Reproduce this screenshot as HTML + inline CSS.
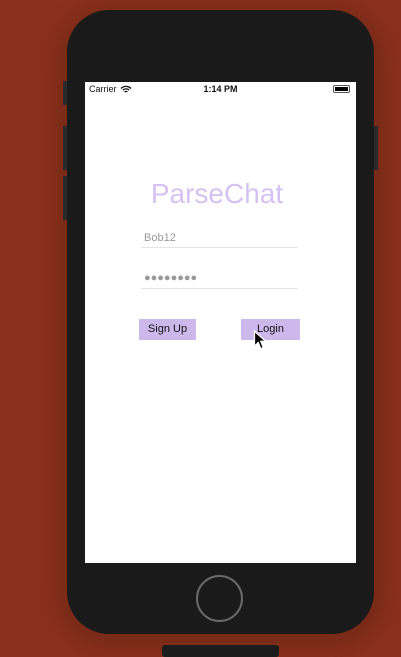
<!DOCTYPE html>
<html><head><style>
body{margin:0;width:401px;height:651px;background:#8a301c;position:relative;overflow:hidden;font-family:"Liberation Sans",sans-serif}
.a{position:absolute}
</style></head><body>
<div class="a" style="left:55px;top:5px;width:332px;height:645px;border-radius:55px;background:#7a2a18;filter:blur(8px)"></div>
<div class="a" style="left:63px;top:81px;width:5px;height:24px;background:#2a2a2a"></div>
<div class="a" style="left:63px;top:126px;width:5px;height:44px;background:#2a2a2a"></div>
<div class="a" style="left:63px;top:176px;width:5px;height:44px;background:#2a2a2a"></div>
<div class="a" style="left:373px;top:126px;width:5px;height:44px;background:#2a2a2a"></div>
<div class="a" style="left:162px;top:645px;width:117px;height:12px;border-radius:3px;background:#1c1c1c"></div>
<div class="a" style="left:67px;top:10px;width:307px;height:624px;border-radius:42px;background:#1a1a1a"></div>
<div class="a" style="left:196px;top:575px;width:43px;height:43px;border-radius:50%;border:2px solid #6a6a6a"></div>
<div class="a" style="left:85px;top:82px;width:271px;height:481px;background:#fff">
 <div class="a" style="left:4px;top:2px;font-size:9px;color:#111">Carrier</div>
 <svg class="a" style="left:35px;top:3px" width="12" height="9" viewBox="0 0 12 9"><path d="M1 3.5a7 7 0 0 1 10 0M2.8 5.2a4.5 4.5 0 0 1 6.4 0M4.6 7a2 2 0 0 1 2.8 0" stroke="#111" stroke-width="1.3" fill="none"/></svg>
 <div class="a" style="left:0;width:271px;top:2px;font-size:9px;font-weight:bold;color:#111;text-align:center">1:14 PM</div>
 <div class="a" style="left:248px;top:3px;width:15px;height:6px;border:1px solid #555;border-radius:2px"><div style="margin:1px;height:4px;background:#000"></div></div>
 <div class="a" style="left:0;width:264px;top:96px;font-size:28px;color:#d6c2f2;text-align:center">ParseChat</div>
 <div class="a" style="left:59px;top:150px;font-size:11px;color:#999">Bob12</div>
 <div class="a" style="left:56px;top:165px;width:157px;height:1px;background:#e6e6e6"></div>
 <div class="a" style="left:59px;top:190px;font-size:11px;color:#999">●●●●●●●●</div>
 <div class="a" style="left:56px;top:206px;width:157px;height:1px;background:#e6e6e6"></div>
 <div class="a" style="left:54px;top:237px;width:57px;height:21px;background:#cdb8ec;font-size:11px;line-height:21px;text-align:center;color:#111">Sign Up</div>
 <div class="a" style="left:156px;top:237px;width:59px;height:21px;background:#cdb8ec;font-size:11px;line-height:21px;text-align:center;color:#111">Login</div>
 <svg class="a" style="left:168px;top:248px" width="13" height="20" viewBox="0 0 10 16"><path d="M1 1v12l3-3 2 5 2-1-2-5h4z" fill="#000" stroke="#fff" stroke-width="1"/></svg>
</div>
</body></html>
